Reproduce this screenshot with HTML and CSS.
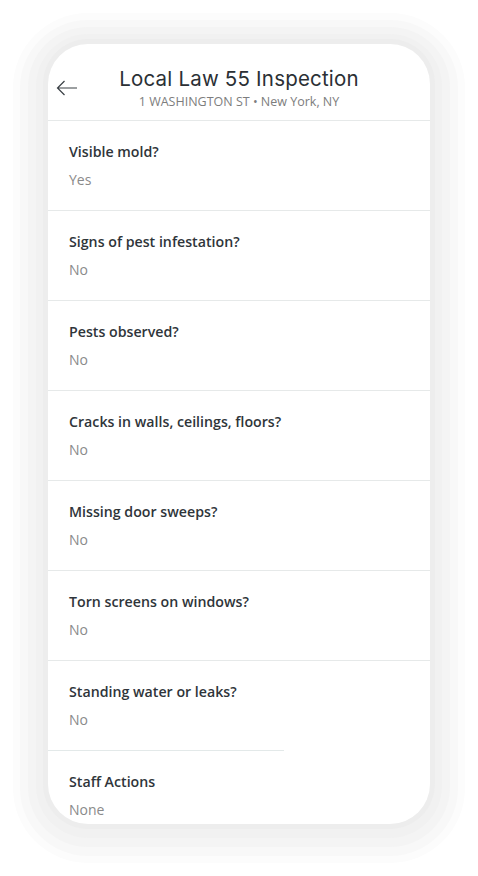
FILE: index.html
```html
<!DOCTYPE html>
<html>
<head>
<meta charset="utf-8">
<link rel="stylesheet" href="styles.css">
</head>
<body>
<div class="stage">
  <div class="phone">
    <header class="header">
      <svg class="back" width="22" height="16" viewBox="0 0 22 16"><path d="M21 8H1.5M8.5 1L1.5 8l7 7" fill="none" stroke="#3a4045" stroke-width="1.2"/></svg>
      <div class="titles">
        <div class="title">Local Law 55 Inspection</div>
        <div class="subtitle">1 WASHINGTON ST • New York, NY</div>
      </div>
    </header>
    <div class="list">
      <div class="row"><div class="q">Visible mold?</div><div class="a">Yes</div></div>
      <div class="row"><div class="q">Signs of pest infestation?</div><div class="a">No</div></div>
      <div class="row"><div class="q">Pests observed?</div><div class="a">No</div></div>
      <div class="row"><div class="q">Cracks in walls, ceilings, floors?</div><div class="a">No</div></div>
      <div class="row"><div class="q">Missing door sweeps?</div><div class="a">No</div></div>
      <div class="row"><div class="q">Torn screens on windows?</div><div class="a">No</div></div>
      <div class="row cut"><div class="q">Standing water or leaks?</div><div class="a">No</div></div>
      <div class="cut-line"></div>
      <div class="row last"><div class="q">Staff Actions</div><div class="a">None</div></div>
    </div>
  </div>
</div>
</body>
</html>
```
FILE: styles.css
```css
html, body { margin: 0; padding: 0; background: #fff; }
body { width: 478px; height: 876px; overflow: hidden; font-family: "Open Sans", "Liberation Sans", sans-serif; }
.stage { padding-top: 44px; padding-left: 48px; }
.phone {
  width: 382px; height: 780px; background: #fff; border-radius: 40px; overflow: hidden;
  box-shadow: 0 0 0 5px #ededed, 0 2px 0 12px #f1f1f1, 0 3px 0 20px #f4f4f4, 0 4px 0 28px #f8f8f8, 0 4px 0 35px #fcfcfc;
  display: flex; flex-direction: column;
}
.header { flex-shrink: 0; height: 76px; border-bottom: 1px solid #e6e9e9; display: flex; align-items: center; position: relative; }
.back { position: absolute; left: 8px; top: 36px; }
.titles { flex: 1; display: flex; flex-direction: column; align-items: center; padding-top: 12px; }
.title { font-family: "Inter", "Open Sans", sans-serif; font-size: 20.5px; color: #2b3035; line-height: 26px; letter-spacing: 0.2px; }
.subtitle { font-size: 12.5px; color: #7d7d7d; line-height: 18px; margin-top: 1px; }
.list { display: flex; flex-direction: column; flex-shrink: 0; }
.row { flex-shrink: 0; border-bottom: 1px solid #e6e9e9; padding: 20px 0 0 21px; box-sizing: border-box; height: 90px; }
.row.cut { border-bottom: none; height: 89px; }
.cut-line { flex-shrink: 0; width: 236px; height: 1px; background: #e3e9e9; }
.row.last { border-bottom: none; }
.q { font-size: 14.2px; font-weight: 600; color: #2f353a; line-height: 22px; }
.a { font-size: 14px; color: #8a8a8a; line-height: 22px; margin-top: 6px; }
```
